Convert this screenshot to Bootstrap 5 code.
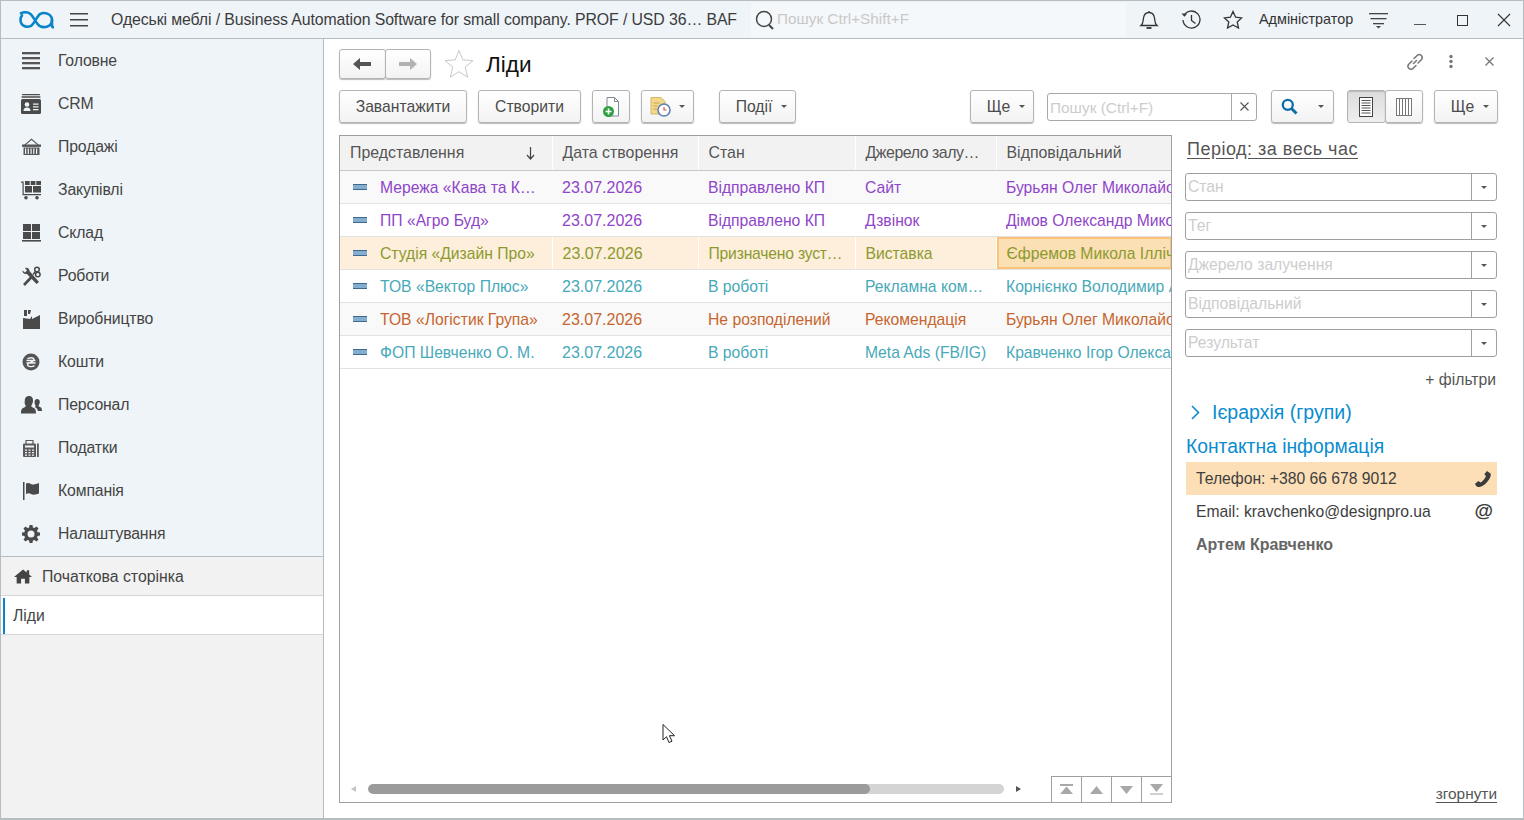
<!DOCTYPE html>
<html lang="uk">
<head>
  <meta charset="UTF-8" />
  <title>Ліди</title>
  <link href="https://cdn.jsdelivr.net/npm/bootstrap@5.3.0/dist/css/bootstrap.min.css" rel="stylesheet">
  <style>
    html, body { height: 100%; overflow: hidden; }
    body { font-family: "Liberation Sans", Arial, sans-serif; font-size: 15.7px; color: #4b4b4b; background: #fff; }
    svg { display: block; flex: none; }
    #app { height: 820px; border: 1px solid #b6bdc1; border-bottom-width: 2px; position: relative; }

    /* top bar */
    #topbar { height: 38px; flex: none; background: #eff4f8; border-bottom: 1px solid #b6bdc1; }
    .app-title { color: #3c3c3c; margin-left: 23px; width: 639px; white-space: nowrap; font-size: 15.85px; letter-spacing: -.1px; }
    .global-search { width: 375px; height: 34px; background: #f5f8fa; border-radius: 3px; margin-left: 1px; padding-left: 2px; color: #c9c9c9; font-size: 15.3px; }
    .user-name { font-size: 14.4px; color: #333; }

    /* sidebar */
    #sidebar { width: 323px; flex: none; background: #f2f2f2; border-right: 1px solid #b6bdc1; }
    .sect-list { background: #eff4f8; border-bottom: 1px solid #b6bdc1; padding-top: 1px; }
    .sect-item { height: 43px; padding: 0 0 1px 20px; color: #444; font-size: 15.8px; letter-spacing: -.15px; }
    .sect-ico { width: 20px; margin-right: 17px; }
    .home-row { height: 39px; border-bottom: 1px solid #d6d6d6; padding: 1px 0 0 13px; color: #444; font-size: 15.8px; }
    .home-row svg { margin-right: 10px; }
    .open-row { height: 39px; background: #fff; border-bottom: 1px solid #d6d6d6; padding: 1px 0 0 2px; color: #444; }
    .open-mark { width: 2px; height: 36px; background: #0a84c8; margin-right: 8px; }

    /* main */
    #main { min-width: 0; padding: 0 25px 15px 15px; }
    .form-head { height: 51px; flex: none; padding-top: 10px; }
    .page-title { font-size: 22.5px; color: #111; margin: -1px 0 0 12px; }
    .tool-row { height: 45px; flex: none; padding-bottom: 12px; }
    .fbtn { height: 33px; padding: 0; display: inline-flex; align-items: center; justify-content: center; font-size: 15.7px; color: #4b4b4b; border: 1px solid #b3b3b3; border-radius: 3px; background: linear-gradient(#fff, #f3f3f3); box-shadow: 0 1px 1px #bbb; }
    .fbtn:hover { color: #4b4b4b; border-color: #b3b3b3; }
    .nav-pair { width: 92px; height: 30px; }
    .nav-pair .fbtn { height: 30px; flex: 1; }
    .nav-pair .fbtn + .fbtn { margin-left: -1px; }
    .fbtn.pressed { background: linear-gradient(#dcdcdc, #efefef); box-shadow: inset 0 1px 1px #bbb; }
    .fbtn.with-tri { padding-left: 8px; gap: 9px; }
    .tri { display: inline-block; width: 0; height: 0; border-left: 3px solid transparent; border-right: 3px solid transparent; border-top: 3px solid #555; }
    .w-load { width: 128px; }
    .w-make { width: 103px; margin-left: 11px; }
    .w-add { width: 38px; margin-left: 11px; }
    .w-hist { width: 53px; margin-left: 11px; }
    .w-events { width: 77px; margin-left: 25px; }
    .w-more { width: 64px; }
    .w-find { width: 63px; margin-left: 14px; }
    .w-view { width: 76px; margin-left: 13px; }
    .w-view .fbtn { flex: 1; }
    .w-view .fbtn + .fbtn { margin-left: -1px; }
    .w-more2 { width: 64px; margin-left: 11px; }
    .search-box { width: 210px; height: 28px; margin-left: 13px; border: 1px solid #a8a8a8; border-radius: 3px; align-self: center; }
    .search-box input { flex: 1; min-width: 0; border: 0; outline: 0; padding: 2px 2px 0; font-size: 15.4px; font-family: inherit; background: transparent; }
    .search-box input::placeholder, .filter-input input::placeholder { color: #cdcdcd; opacity: 1; }
    .search-clear { width: 25px; border-left: 1px solid #a8a8a8; }

    /* list */
    #listbox { width: 833px; flex: none; border: 1px solid #a0a0a0; overflow: hidden; }
    .lead-table { table-layout: fixed; width: 832px; border-collapse: collapse; }
    .lead-table th { height: 34px; background: #f2f2f2; font-weight: 400; font-size: 15.9px; color: #555; border-right: 1px solid #fff; border-bottom: 1px solid #c9c9c9; padding: 1px 10px 0; white-space: nowrap; overflow: hidden; }
    .lead-table th.tight { letter-spacing: -.45px; }
    .lead-table td { height: 33px; border-bottom: 1px solid #e2e2e2; padding: 2px 10px 0; white-space: nowrap; overflow: hidden; }
    .lead-table td.date-cell { font-size: 16px; }
    .lead-table td.tight-cell { letter-spacing: -.2px; }
    .lead-table th:last-child, .lead-table td:last-child { border-right: 0; }
    .lead-table tr.odd td { background: #f9f9f9; }
    .lead-table tr.picked td { background: #feeedc; border-right: 1px solid #fff; }
    .lead-table tr.picked td.cur { background: #fbdfb5; box-shadow: inset 0 0 0 2px #fcc277; border-right: 0; }
    .lead-table td:first-child { padding-left: 13px; }
    .sort-arrow { margin-right: 7px; }
    .row-mark { width: 14px; height: 6px; background: #84aed0; border: 1px solid #3d6a8c; border-width: 1px 0; margin-right: 13px; flex: none; }
    .c-purple td { color: #8f45c9; }
    .c-olive td { color: #8c9a2d; }
    .c-teal td { color: #48a9b9; }
    .c-orange td { color: #c6652d; }
    .list-foot { height: 27px; }
    .scroll-track { width: 636px; height: 10px; margin: 0 12px 0 12px; background: #d4d4d4; border-radius: 5px; overflow: hidden; }
    .scroll-thumb { width: 502px; height: 10px; background: #9b9b9b; border-radius: 5px; }
    .arr-l { border-top: 3px solid transparent; border-bottom: 3px solid transparent; border-right: 5px solid #c4c4c4; margin-left: 11px; }
    .arr-r { border-top: 3px solid transparent; border-bottom: 3px solid transparent; border-left: 5px solid #555; }
    .pg-btns { margin-left: 30px; }
    .pg-btn { width: 30px; height: 27px; border-top: 1px solid #a0a0a0; border-left: 1px solid #a0a0a0; margin-bottom: -1px; }

    /* right panel */
    #side-panel { width: 311px; margin-left: 14px; flex: none; }
    .period-link { font-size: 18px; color: #555; text-decoration: underline; text-underline-offset: 3px; letter-spacing: .5px; margin: 1px 0 10px 1px; }
    .filter-input { height: 28px; margin: 0 0 11px -1px; border: 1px solid #a0a0a0; border-radius: 3px; width: 312px; }
    .filter-input input { flex: 1; min-width: 0; border: 0; outline: 0; padding: 0 2px; font-size: 15.7px; font-family: inherit; background: transparent; }
    .filter-drop { width: 25px; border-left: 1px solid #a0a0a0; }
    .more-filters { text-align: right; margin: 2px 1px 0 0; line-height: 20px; color: #555; }
    .tree-head { color: #0a8ccf; font-size: 19.5px; margin: 9px 0 0 5px; line-height: 26px; }
    .tree-head svg { margin-right: 12px; }
    .contacts-head { color: #0a8ccf; font-size: 19.3px; line-height: 26px; margin-top: 9px; }
    .contact-row { height: 33px; padding: 0 6px 0 10px; color: #3e3e3e; }
    .contact-row.hot { background: #fcdfb6; margin-top: 2px; }
    .at-sign { font-size: 19px; font-weight: 700; color: #3c3c3c; line-height: 1; margin: -3px -2px 0 0; }
    .person-name { font-weight: 700; font-size: 16px; color: #666; padding-left: 10px; line-height: 33px; }
    .fold-link { color: #555; font-size: 15.4px; text-decoration: underline; text-underline-offset: 3px; text-align: right; line-height: 20px; margin-bottom: -1px; }

    .mouse-ptr { position: absolute; left: 661px; top: 723px; }
  </style>
</head>
<body class="m-0">

<div id="app" class="d-flex flex-column">

  <!-- top bar -->
  <div id="topbar" class="d-flex align-items-center">
    <svg style="margin-left:18px" width="35" height="18" viewBox="0 0 35 18" fill="none" stroke="#0a84c8" stroke-width="2.6" stroke-linecap="round"><path d="M2 2.2C5 1 9 1.2 11.5 3C14.5 5.5 17 12.5 20.5 14.800C25 17.500 33 16 33 9C33 3 25.500 .5 21 3.200C18 5.200 15.500 12.500 12 14.800C8 17 1.500 15 1.500 9C1.500 7 2 5.500 3 4.500"/><path d="M33 9V14.500Q33 16.300 34.500 16.300"/></svg>
    <svg style="margin-left:16px" width="18" height="14" viewBox="0 0 18 14" fill="#444"><rect width="18" height="1.500" y="0"/><rect width="18" height="1.500" y="6"/><rect width="18" height="1.500" y="12"/></svg>
    <div class="app-title">Одеські меблі / Business Automation Software for small company. PROF / USD 36… BAF</div>
    <div class="global-search d-flex align-items-center">
      <svg width="24" height="22" viewBox="0 0 24 22" fill="none" stroke="#444" stroke-width="1.500"><circle cx="11" cy="10" r="7.500"/><path d="M16 16l4 4" stroke-width="2"/></svg>
      <span>Пошук Ctrl+Shift+F</span>
    </div>
    <svg style="margin-left:13px" width="20" height="20" viewBox="0 0 20 20" fill="none" stroke="#333" stroke-width="1.300"><path d="M2 15.500C4.500 13.500 4 11 4.500 8C5 4.500 7 2.500 10 2.500S15 4.500 15.500 8C16 11 15.500 13.500 18 15.500Z"/><path d="M10 1v1.500"/><path d="M7.500 18h5" stroke-width="1.800"/></svg>
    <svg style="margin-left:21px" width="22" height="20" viewBox="0 0 22 20" fill="none" stroke="#333" stroke-width="1.300"><path d="M4 5.500A8.500 8.500 0 1 1 3 10"/><path d="M1.500 3.500L4.500 6.800L7 3.800" fill="#333" stroke="none"/><path d="M11.500 5v5.500l4 3"/></svg>
    <svg style="margin-left:21px" width="20" height="20" viewBox="0 0 20 20" fill="none" stroke="#333" stroke-width="1.300"><path d="M10 1.500l2.600 5.700 6.100.7-4.500 4.100 1.300 6.100L10 15l-5.500 3.100 1.300-6.100L1.300 7.900l6.100-.7z"/></svg>
    <div class="user-name" style="margin-left:16px">Адміністратор</div>
    <svg style="margin-left:16px" width="20" height="18" viewBox="0 0 20 18" fill="#444"><rect y="2" width="19" height="1.300"/><rect x="1.500" y="7" width="16" height="1.300"/><rect x="4" y="12" width="11" height="1.300"/><path d="M7 15h5l-2.500 2.500z"/></svg>
    <svg style="margin:8px 0 0 25px" width="12" height="4" viewBox="0 0 12 4" fill="#555"><rect y="2" width="12" height="1"/></svg>
    <svg style="margin:1px 0 0 31px" width="11" height="11" viewBox="0 0 11 11" fill="none" stroke="#333"><rect x=".5" y=".5" width="10" height="10"/></svg>
    <svg style="margin:1px 0 0 29px" width="14" height="14" viewBox="0 0 14 14" fill="none" stroke="#333" stroke-width="1.100"><path d="M1 1l12 12M13 1L1 13"/></svg>
  </div>

  <div class="d-flex flex-grow-1" style="min-height:0">

    <!-- sections -->
    <div id="sidebar" class="d-flex flex-column">
      <div class="sect-list">
        <div class="sect-item d-flex align-items-center"><div class="sect-ico d-flex justify-content-center"><svg width="18" height="18" viewBox="0 0 18 18" fill="#555"><rect width="18" height="2.300" y="0"/><rect width="18" height="2.300" y="5"/><rect width="18" height="2.300" y="10"/><rect width="18" height="2.300" y="15"/></svg></div>Головне</div>
        <div class="sect-item d-flex align-items-center"><div class="sect-ico d-flex justify-content-center"><svg width="20" height="20" viewBox="0 0 20 20" fill="#4a4a4a"><rect x="1" width="18" height="1.300" rx=".6"/><rect x=".5" y="2.300" width="19" height="1.500" rx=".6"/><rect y="5" width="20" height="15" rx="1.500"/><circle cx="6" cy="10.500" r="2.300" fill="#eff4f8"/><path d="M2.500 17c0-3 2-3.500 3.500-3.500s3.500.5 3.500 3.500z" fill="#eff4f8"/><path d="M12 9.500h5.500v1.200H12zM12 12.300h5.500v1.200H12zM12 15h5.500v1.200H12z" fill="#eff4f8"/></svg></div>CRM</div>
        <div class="sect-item d-flex align-items-center"><div class="sect-ico d-flex justify-content-center"><svg width="19" height="18" viewBox="0 0 19 18" fill="#555"><path d="M2 7L9.500 0.500 17 7H15.300L9.500 2 3.700 7z"/><rect y="6.500" width="19" height="2.400"/><path d="M1.500 9.500h16v7.500h-16zM3 10.500v5.500h1.200v-5.500zM5.700 10.500v5.500h1.200v-5.500zM8.500 10.500v5.500h1.200v-5.500zM11.200 10.500v5.500h1.200v-5.500zM14 10.500v5.500h1.200v-5.500z" fill-rule="evenodd"/></svg></div>Продажі</div>
        <div class="sect-item d-flex align-items-center"><div class="sect-ico d-flex justify-content-center"><svg width="20" height="19" viewBox="0 0 20 19" fill="#4a4a4a"><path d="M0 .5h2.700v12.500H20v1.300H1.500V1.800H0z"/><rect x="4" y="0" width="4.700" height="4"/><rect x="9.700" y="0" width="4.700" height="4"/><rect x="15.300" y="0" width="4.700" height="4"/><rect x="4" y="5" width="7" height="6.500"/><rect x="12" y="5" width="8" height="6.500"/><circle cx="5" cy="16.800" r="1.800"/><circle cx="16" cy="16.800" r="1.800"/></svg></div>Закупівлі</div>
        <div class="sect-item d-flex align-items-center"><div class="sect-ico d-flex justify-content-center"><svg width="19" height="18" viewBox="0 0 19 18" fill="#4a4a4a"><rect x="1" width="8" height="7"/><rect x="10" width="8" height="7"/><rect x="1" y="8" width="8" height="7"/><rect x="10" y="8" width="8" height="7"/><rect y="16" width="19" height="1.600"/></svg></div>Склад</div>
        <div class="sect-item d-flex align-items-center"><div class="sect-ico d-flex justify-content-center"><svg width="20" height="20" viewBox="0 0 20 20" fill="none" stroke="#4a4a4a"><path d="M1.500 4.500L4 6.500 6 4.500 4 2C6.500 1 8.500 2.500 8.500 5L18 16 15.500 18 6 8C3.500 8.500 1 7 1.500 4.500Z" fill="#4a4a4a" stroke="none"/><path d="M3 19L11.500 10" stroke-width="2.600"/><path d="M12 8.500L14.500 5.500" stroke-width="1.500"/><circle cx="16" cy="3.500" r="2.300" stroke-width="1.500"/><circle cx="16.800" cy="8.500" r="2.300" stroke-width="1.500"/></svg></div>Роботи</div>
        <div class="sect-item d-flex align-items-center"><div class="sect-ico d-flex justify-content-center"><svg width="19" height="19" viewBox="0 0 19 19" fill="#4a4a4a"><path d="M2 0h3v6H2zM6 0h3l-1 4H6z"/><path d="M1 19V8l7 1 2-3v3l8-4v14z"/></svg></div>Виробництво</div>
        <div class="sect-item d-flex align-items-center"><div class="sect-ico d-flex justify-content-center"><svg width="18" height="18" viewBox="0 0 18 18"><circle cx="9" cy="9" r="8.500" fill="#555"/><path d="M5.500 6C6.500 4.500 11.500 4 12 6.500 12.300 9 5.500 9 5.500 12 6 14 11 14 12.500 12.500M4.500 7.500H13.500M4.500 10H13.500" fill="none" stroke="#eff4f8" stroke-width="1.300"/></svg></div>Кошти</div>
        <div class="sect-item d-flex align-items-center"><div class="sect-ico d-flex justify-content-center"><svg width="21" height="18" viewBox="0 0 21 18" fill="#4a4a4a"><path d="M8 0c3 0 4.300 2.300 4 5-.2 2-1 3.500-1.700 4.500 0 1 .4 1.500 2 2.200 2 .8 2.700 1.800 2.700 5.800H0c0-4 .7-5 2.700-5.800 1.600-.7 2-1.200 2-2.200C4 8.500 3.200 7 3.800 5 3.700 2.300 5 0 8 0z"/><path d="M16 3c2 0 3 1.500 2.800 3.300-.1 1.400-.7 2.500-1.200 3.200 0 .8.300 1.100 1.500 1.600 1.300.5 1.900 1.300 1.900 3.900H17c-.5-2-1.700-3-3-3.700l.6-1.300C14 8.800 13.500 7.500 13.500 6 13.500 4.500 14.300 3 16 3z"/></svg></div>Персонал</div>
        <div class="sect-item d-flex align-items-center"><div class="sect-ico d-flex justify-content-center"><svg width="16" height="17" viewBox="0 0 16 17" fill="#5a5a5a"><path d="M3 .5h7v4H3z" fill="none" stroke="#5a5a5a" stroke-width="1.200"/><rect y="3.500" width="13" height="13.500" rx="1"/><rect x="2" y="5.500" width="9" height="2" fill="#eff4f8"/><path d="M2 9.500h2v1.300H2zM5.500 9.500h2v1.300h-2zM9 9.500h2v1.300H9zM2 12h2v1.300H2zM5.500 12h2v1.300h-2zM9 12h2v1.300H9zM2 14.500h2v1.300H2zM5.500 14.500h2v1.300h-2zM9 14.500h2v1.300H9z" fill="#eff4f8"/><rect x="14" y="3.500" width="1.800" height="13.500"/></svg></div>Податки</div>
        <div class="sect-item d-flex align-items-center"><div class="sect-ico d-flex justify-content-center"><svg width="16" height="18" viewBox="0 0 16 18" fill="#4a4a4a"><rect width="1.500" height="18"/><path d="M3 1.500C5 .5 6.500 1 8 2c1.700 1 3.500.5 8-1v10.500c-4.500 1.500-6.300 1.500-8 .5-1.500-1-3-1-5 0z"/></svg></div>Компанія</div>
        <div class="sect-item d-flex align-items-center"><div class="sect-ico d-flex justify-content-center"><svg width="18" height="18" viewBox="0 0 18 18" fill="#4a4a4a"><path fill-rule="evenodd" d="M7.500 0h3l.4 2.500 1.500.6L14.500 1.600l2 2-1.500 2.100.6 1.500 2.400.3v3l-2.400.4-.6 1.500 1.500 2-2 2.100-2.100-1.500-1.500.6-.4 2.400h-3l-.4-2.400-1.500-.6-2.100 1.500-2-2.100 1.500-2-.6-1.500L0 10.500v-3l2.400-.3.6-1.500-1.500-2.100 2-2 2.100 1.500 1.500-.6zM9 5.500a3.500 3.500 0 1 0 0 7 3.500 3.500 0 0 0 0-7z"/></svg></div>Налаштування</div>
      </div>
      <div class="home-row d-flex align-items-center"><svg width="18" height="15" viewBox="0 0 19 15" fill="#444"><path d="M9.500 0L0 8h2.800v7h4.700v-5h4v5h4.700V8H19l-3-2.600V1h-2.500v2.300z"/></svg>Початкова сторінка</div>
      <div class="open-row d-flex align-items-center"><div class="open-mark"></div>Ліди</div>
    </div>

    <!-- form -->
    <div id="main" class="d-flex flex-column flex-grow-1">

      <div class="form-head d-flex align-items-start">
        <div class="nav-pair d-flex">
          <button class="btn fbtn" type="button"><svg width="18" height="12" viewBox="0 0 18 12" fill="#555"><path d="M7 0v4h11v4H7v4L0 6z"/></svg></button>
          <button class="btn fbtn" type="button"><svg width="18" height="12" viewBox="0 0 18 12" fill="#b2b2b2"><path d="M11 0v4H0v4h11v4l7-6z"/></svg></button>
        </div>
        <svg style="margin-left:13px" width="30" height="30" viewBox="0 0 30 30" fill="none" stroke="#c8c8c8" stroke-width="1"><path d="M15 1.500l3.800 9.400 10.200.7-7.800 6.500 2.500 10-8.700-5.400-8.700 5.400 2.500-10L1 11.600l10.200-.7z"/></svg>
        <div class="page-title">Ліди</div>
        <svg class="ms-auto" style="margin-top:3px" width="20" height="20" viewBox="0 0 20 20" fill="none" stroke="#777" stroke-width="1.500" stroke-linecap="round"><path d="M8.500 11.500l3-3M7 9L3.500 12.500a3 3 0 0 0 4 4.300L11 13.500M9 6.500l3.500-3.300a3 3 0 0 1 4.300 4L13 11"/></svg>
        <svg style="margin:5px 0 0 24px" width="4" height="15" viewBox="0 0 4 15" fill="#777"><circle cx="2" cy="2.500" r="1.700"/><circle cx="2" cy="7.500" r="1.700"/><circle cx="2" cy="12.500" r="1.700"/></svg>
        <svg style="margin:8px 4px 0 32px" width="9" height="9" viewBox="0 0 9 9" fill="none" stroke="#777" stroke-width="1.300"><path d="M.5.500l8 8M8.500.500l-8 8"/></svg>
      </div>

      <div class="tool-row d-flex align-items-start">
        <button class="btn fbtn w-load" type="button">Завантажити</button>
        <button class="btn fbtn w-make" type="button">Створити</button>
        <button class="btn fbtn w-add" type="button">
          <svg width="18" height="22" viewBox="0 0 18 22" fill="none"><path d="M5 1.500h7.500l4 4v14.500H5z" fill="#fff" stroke="#7f8a94"/><path d="M12.500 1.500v4h4" stroke="#7f8a94"/><circle cx="6.500" cy="15.500" r="5.500" fill="#2ea043"/><path d="M6.500 12.500v6M3.500 15.500h6" stroke="#fff" stroke-width="1.600"/></svg>
        </button>
        <button class="btn fbtn w-hist gap-2" type="button">
          <svg width="21" height="21" viewBox="0 0 21 21" fill="none"><path d="M1 1.500h10l4 4V18H1z" fill="#f3d78c" stroke="#d6b765"/><path d="M3.500 7h6M3.500 10h4M3.500 13h4" stroke="#c9a44f"/><circle cx="14" cy="14" r="6" fill="#fff" stroke="#5a7fb0" stroke-width="1.500"/><path d="M14 11v3h2.500" stroke="#d9534f" stroke-width="1.200"/></svg>
          <span class="tri"></span>
        </button>
        <button class="btn fbtn w-events with-tri" type="button">Події <span class="tri"></span></button>
        <button class="btn fbtn w-more with-tri ms-auto" type="button">Ще <span class="tri"></span></button>
        <div class="search-box d-flex">
          <input type="text" placeholder="Пошук (Ctrl+F)">
          <div class="search-clear d-flex align-items-center justify-content-center"><svg width="9" height="9" viewBox="0 0 9 9" fill="none" stroke="#555" stroke-width="1.100"><path d="M.5.500l8 8M8.500.500l-8 8"/></svg></div>
        </div>
        <button class="btn fbtn w-find" type="button">
          <svg class="me-3" width="17" height="17" viewBox="0 0 17 17" fill="none" stroke="#0f6ea8"><circle cx="6.800" cy="6.800" r="5" stroke-width="2.300"/><path d="M10.500 10.500l5 5" stroke-width="3"/></svg>
          <span class="tri ms-1"></span>
        </button>
        <div class="w-view d-flex">
          <button class="btn fbtn pressed" type="button"><svg width="14" height="20" viewBox="0 0 14 20" fill="none" stroke="#555"><rect x=".5" y=".5" width="13" height="19" fill="#fff" stroke="#444"/><path d="M2.500 3.500h9M2.500 6h9M2.500 8.500h9M2.500 11h9M2.500 13.500h9M2.500 16h9" stroke-width="1.200"/></svg></button>
          <button class="btn fbtn" type="button"><svg width="16" height="18" viewBox="0 0 16 18" fill="none" stroke="#777"><rect x=".5" y=".5" width="15" height="17" fill="#fff"/><path d="M3.500 1v16M6.500 1v16M9.500 1v16M12.500 1v16"/></svg></button>
        </div>
        <button class="btn fbtn w-more2 with-tri" type="button">Ще <span class="tri"></span></button>
      </div>

      <div class="d-flex flex-grow-1" style="min-height:0">

        <div id="listbox" class="d-flex flex-column">
          <table class="lead-table">
            <colgroup><col style="width:212px"><col style="width:146px"><col style="width:157px"><col style="width:141px"><col style="width:176px"></colgroup>
            <thead>
              <tr>
                <th><div class="d-flex align-items-center justify-content-between">Представлення <svg class="sort-arrow" width="9" height="13" viewBox="0 0 9 13" fill="none" stroke="#444" stroke-width="1.200"><path d="M4.500 0v11.500M1 8l3.500 4L8 8"/></svg></div></th>
                <th>Дата створення</th>
                <th>Стан</th>
                <th class="tight">Джерело залу…</th>
                <th>Відповідальний</th>
              </tr>
            </thead>
            <tbody>
              <tr class="odd c-purple"><td><div class="d-flex align-items-center"><span class="row-mark"></span>Мережа «Кава та К…</div></td><td class="date-cell">23.07.2026</td><td>Відправлено КП</td><td>Сайт</td><td>Бурьян Олег Миколайович</td></tr>
              <tr class="c-purple"><td><div class="d-flex align-items-center"><span class="row-mark"></span>ПП «Агро Буд»</div></td><td class="date-cell">23.07.2026</td><td>Відправлено КП</td><td>Дзвінок</td><td>Дімов Олександр Миколайович</td></tr>
              <tr class="picked c-olive"><td><div class="d-flex align-items-center"><span class="row-mark"></span>Студія «Дизайн Про»</div></td><td class="date-cell">23.07.2026</td><td class="tight-cell">Призначено зуст…</td><td>Виставка</td><td class="cur">Єфремов Микола Ілліч</td></tr>
              <tr class="c-teal"><td><div class="d-flex align-items-center"><span class="row-mark"></span>ТОВ «Вектор Плюс»</div></td><td class="date-cell">23.07.2026</td><td>В роботі</td><td>Рекламна ком…</td><td>Корнієнко Володимир Андрійович</td></tr>
              <tr class="odd c-orange"><td><div class="d-flex align-items-center"><span class="row-mark"></span>ТОВ «Логістик Група»</div></td><td class="date-cell">23.07.2026</td><td>Не розподілений</td><td>Рекомендація</td><td>Бурьян Олег Миколайович</td></tr>
              <tr class="c-teal"><td><div class="d-flex align-items-center"><span class="row-mark"></span>ФОП Шевченко О. М.</div></td><td class="date-cell">23.07.2026</td><td>В роботі</td><td>Meta Ads (FB/IG)</td><td>Кравченко Ігор Олександрович</td></tr>
            </tbody>
          </table>
          <div class="list-foot d-flex align-items-center mt-auto">
            <span class="arr-l"></span>
            <div class="scroll-track"><div class="scroll-thumb"></div></div>
            <span class="arr-r"></span>
            <div class="pg-btns d-flex">
              <div class="pg-btn d-flex align-items-center justify-content-center"><svg width="13" height="11" viewBox="0 0 13 11" fill="#a8a8a8"><rect width="13" height="2"/><path d="M6.500 2.500L13 10H0z"/></svg></div>
              <div class="pg-btn d-flex align-items-center justify-content-center"><svg width="13" height="8" viewBox="0 0 13 8" fill="#a8a8a8"><path d="M6.500 0L13 8H0z"/></svg></div>
              <div class="pg-btn d-flex align-items-center justify-content-center"><svg width="13" height="8" viewBox="0 0 13 8" fill="#a8a8a8"><path d="M6.500 8L13 0H0z"/></svg></div>
              <div class="pg-btn d-flex align-items-center justify-content-center"><svg width="13" height="11" viewBox="0 0 13 11" fill="#a8a8a8"><path d="M6.500 8L13 0H0z"/><rect y="9" width="13" height="2" fill="#d0d0d0"/></svg></div>
            </div>
          </div>
        </div>

        <div id="side-panel" class="d-flex flex-column">
          <div class="period-link">Період: за весь час</div>
          <div class="filter-input d-flex"><input type="text" placeholder="Стан"><div class="filter-drop d-flex align-items-center justify-content-center"><span class="tri"></span></div></div>
          <div class="filter-input d-flex"><input type="text" placeholder="Тег"><div class="filter-drop d-flex align-items-center justify-content-center"><span class="tri"></span></div></div>
          <div class="filter-input d-flex"><input type="text" placeholder="Джерело залучення"><div class="filter-drop d-flex align-items-center justify-content-center"><span class="tri"></span></div></div>
          <div class="filter-input d-flex"><input type="text" placeholder="Відповідальний"><div class="filter-drop d-flex align-items-center justify-content-center"><span class="tri"></span></div></div>
          <div class="filter-input d-flex"><input type="text" placeholder="Результат"><div class="filter-drop d-flex align-items-center justify-content-center"><span class="tri"></span></div></div>
          <div class="more-filters">+ фільтри</div>
          <div class="tree-head d-flex align-items-center"><svg width="9" height="15" viewBox="0 0 9 15" fill="none" stroke="#0a8ccf" stroke-width="1.600"><path d="M1 1l6.500 6.500L1 14"/></svg>Ієрархія (групи)</div>
          <div class="contacts-head">Контактна інформація</div>
          <div class="contact-row hot d-flex align-items-center justify-content-between">Телефон: +380 66 678 9012
            <svg width="16" height="16" viewBox="0 0 16 16" fill="#3c3c3c"><path d="M12 0l3.500 2.500c.6 1 .3 2.800-1 5.200-2 3.500-5.500 7-9 8-2 .6-3.500 0-4.500-1L0 12.800 3.500 10l2 1.500c2-1 4.300-3.500 5.500-6.500L9.300 3.200z"/></svg>
          </div>
          <div class="contact-row d-flex align-items-center justify-content-between">Email: kravchenko@designpro.ua
            <span class="at-sign">@</span>
          </div>
          <div class="person-name">Артем Кравченко</div>
          <div class="fold-link mt-auto">згорнути</div>
        </div>

      </div>
    </div>
  </div>

  <!-- mouse pointer -->
  <svg class="mouse-ptr" width="14" height="20" viewBox="0 0 14 20" fill="#fff" stroke="#222"><path d="M1 .5V16l3.500-3.300L7 18.500l3-1.300-2.600-5.500H12.500z"/></svg>
</div>

<script src="https://cdn.jsdelivr.net/npm/bootstrap@5.3.0/dist/js/bootstrap.bundle.min.js"></script>
</body>
</html>
